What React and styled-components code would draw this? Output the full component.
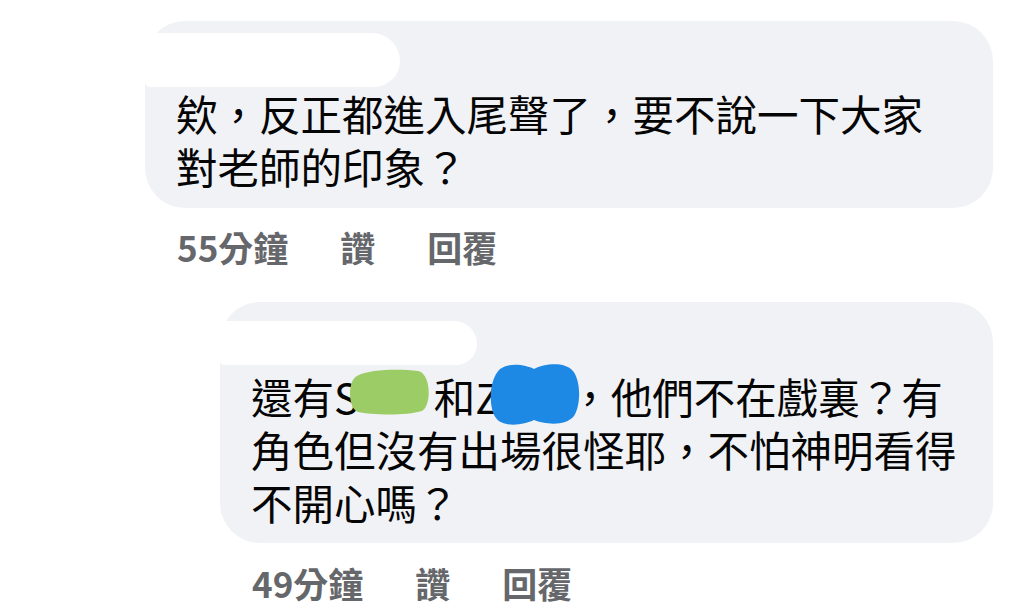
import React from "react";
import styled, { createGlobalStyle } from "styled-components";

const GlobalStyle = createGlobalStyle`
  html, body {
    margin: 0;
    padding: 0;
    background: #ffffff;
  }
  body {
    font-family: "Noto Sans CJK TC", "Noto Sans", sans-serif;
    color: #050505;
  }
`;

const Page = styled.div`
  width: 1024px;
  height: 616px;
  overflow: hidden;
  padding-top: 21px;
  box-sizing: border-box;
`;

const Comment = styled.div`
  margin-left: ${p => p.$indent}px;
  width: ${p => 993 - p.$indent}px;
  margin-top: ${p => p.$top || 0}px;
`;

const Bubble = styled.div`
  background: #f0f2f5;
  border-radius: 40px;
  padding: ${p => p.$top}px 30px ${p => p.$bottom}px 31px;
`;

// white scribble over the author's name
const NameSmudge = styled.div`
  margin-left: -31px;
  width: ${p => p.$w}px;
  height: ${p => p.$h}px;
  margin-bottom: ${p => p.$mb || 0}px;
  background: #ffffff;
  border-radius: 4px 30px 28px 6px;
`;

const Text = styled.p`
  margin: 0;
  font-size: 41.5px;
  line-height: 53px;
  font-weight: 400;
  white-space: nowrap;
`;

const Line = styled.span`
  display: block;
`;

const Redact = styled.svg`
  display: inline-block;
  vertical-align: ${p => p.$va}px;
  margin: -14px ${p => p.$mr}px -14px ${p => p.$ml}px;
`;

const Meta = styled.div`
  display: flex;
  gap: 52px;
  margin-top: ${p => p.$mt}px;
  padding-left: 32px;
  font-size: 35px;
  line-height: 40px;
  font-weight: 700;
  color: #65676b;
`;

const Action = styled.span`
  cursor: pointer;
`;

const GreenBlob = () => (
  <Redact width="82" height="47" viewBox="0 0 82 47" $va={13} $ml={-11} $mr={4}>
    <path
      d="M9 8 C22 1 52 1 70 3 C83 5 84 37 74 43 C58 48 24 47 10 44 C0 41 -1 13 9 8 Z"
      fill="#9ccc65"
    />
  </Redact>
);

const BlueBlob = () => (
  <Redact width="92" height="63" viewBox="0 0 92 63" $va={2} $ml={-12} $mr={-11}>
    <path
      d="M12 6 C22 -1 38 2 46 6 C56 1 76 -2 85 8 C93 18 93 42 86 53 C77 64 56 61 46 57 C36 62 15 65 8 55 C0 44 1 16 12 6 Z"
      fill="#1e88e5"
    />
  </Redact>
);

export default function App() {
  return (
    <Page>
      <GlobalStyle />
      <Comment $indent={145}>
        <Bubble $top={12} $bottom={15}>
          <NameSmudge $w={255} $h={54} />
          <Text>
            <Line>欸，反正都進入尾聲了，要不說一下大家</Line>
            <Line>對老師的印象？</Line>
          </Text>
        </Bubble>
        <Meta $mt={19}>
          <Action>55分鐘</Action>
          <Action>讚</Action>
          <Action>回覆</Action>
        </Meta>
      </Comment>
      <Comment $indent={220} $top={35}>
        <Bubble $top={19} $bottom={14}>
          <NameSmudge $w={257} $h={44} $mb={5} />
          <Text>
            <Line>
              還有S<GreenBlob />和Z<BlueBlob />，他們不在戲裏？有
            </Line>
            <Line>角色但沒有出場很怪耶，不怕神明看得</Line>
            <Line>不開心嗎？</Line>
          </Text>
        </Bubble>
        <Meta $mt={20}>
          <Action>49分鐘</Action>
          <Action>讚</Action>
          <Action>回覆</Action>
        </Meta>
      </Comment>
    </Page>
  );
}
